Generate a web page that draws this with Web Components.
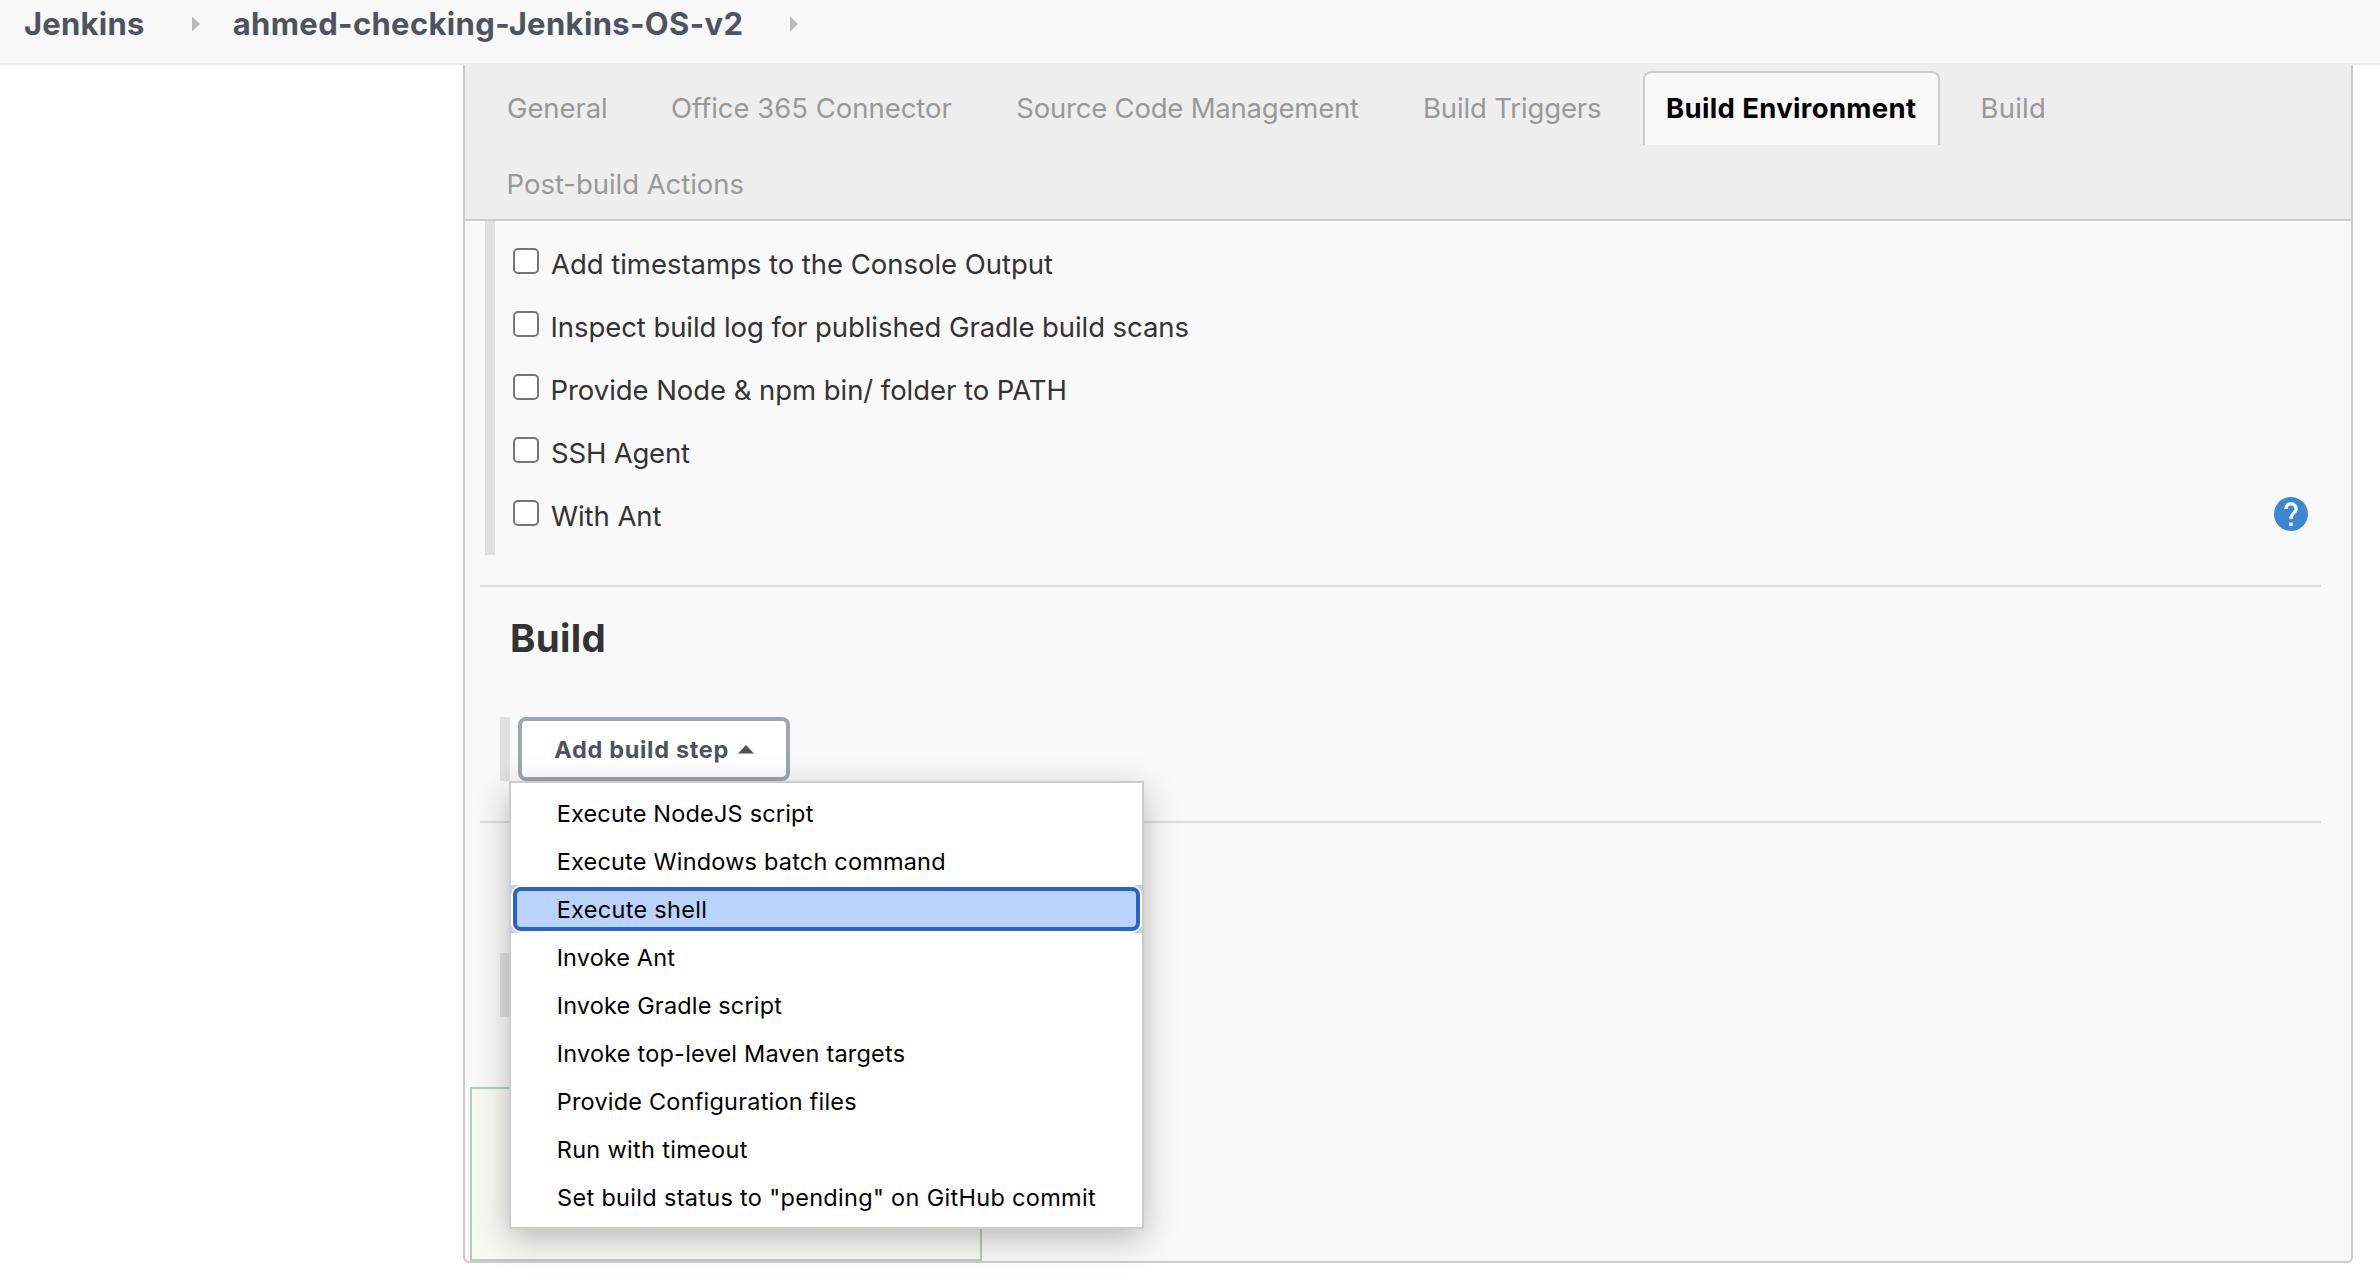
<!DOCTYPE html>
<html lang="en">
<head>
<meta charset="utf-8">
<title>ahmed-checking-Jenkins-OS-v2 Config</title>
<style>
  html, body { margin: 0; height: 100%; background: #fff; overflow: hidden; }
  body { font-family: Inter, "Liberation Sans", sans-serif; color: #333; }
</style>
</head>
<body>
<jenkins-config></jenkins-config>
<script>
const define = (name, html, setup) => {
  const template = document.createElement('template');
  template.innerHTML = html;
  customElements.define(name, class extends HTMLElement {
    connectedCallback() {
      if (this.shadowRoot) return;
      this.attachShadow({ mode: 'open' }).append(template.content.cloneNode(true));
      if (setup) setup(this);
    }
  });
};

// A one-line label tracked so that its glyphs span exactly the "w" pixels;
const pen = document.createElement('canvas').getContext('2d');
define('tracked-label', `
  <style>
    :host { display: block; flex: none; white-space: nowrap; }
    span { display: block; }
  </style>
  <span><slot></slot></span>`, el => {
  const cs = getComputedStyle(el);
  const text = el.textContent;
  const w = parseFloat(el.getAttribute('w'));
  const dx = parseFloat(el.getAttribute('dx') || 0);
  pen.font = `${cs.fontWeight} ${cs.fontSize} ${cs.fontFamily}`;
  const m = pen.measureText(text);
  const ink = m.actualBoundingBoxLeft + m.actualBoundingBoxRight;
  el.style.width = w + 'px';
  const span = el.shadowRoot.querySelector('span');
  span.style.letterSpacing = (w - ink - dx) / (text.length - 1) + 'px';
  span.style.marginLeft = m.actualBoundingBoxLeft + dx + 'px';
});

define('crumb-arrow', `
  <style>:host { display: block; flex: none; width: 8px; height: 16px; } svg { display: block; }</style>
  <svg width="8" height="16" viewBox="0 0 8 16"><path d="M0 0.5L8 8L0 15.5Z" fill="#b9b9b9"/></svg>`);

define('crumb-bar', `
  <style>
    :host { display: block; box-sizing: border-box; height: 65px; background: #f8f8f8; border-bottom: 2px solid #eaeef2; }
    nav { display: flex; align-items: center; height: 47px; padding-left: 25px; line-height: 47px; font-size: 31px; font-weight: 700; color: #4d545d; }
    crumb-arrow.a { margin: 0 33px 0 48px; }
    crumb-arrow.b { margin-left: 48.5px; }
  </style>
  <nav>
    <tracked-label w="119">Jenkins</tracked-label><crumb-arrow class="a"></crumb-arrow>
    <tracked-label w="508.5" dx="0.7">ahmed-checking-Jenkins-OS-v2</tracked-label><crumb-arrow class="b"></crumb-arrow>
  </nav>`);

define('config-tab', `
  <style>
    :host { display: block; box-sizing: border-box; height: 74px; line-height: 74px; padding: 0 21px; color: #999; }
    :host([active]) { margin: 0 -2px 0 -3px; padding: 0 21.5px; line-height: 70px; border: 2px solid #ccc; border-bottom: 0;
      border-radius: 8px 8px 0 0; background: #f9f9f9; color: #000; font-weight: 700; }
  </style>
  <slot></slot>`);

define('config-tabs', `
  <style>
    :host { display: flex; flex-direction: column; gap: 2px; box-sizing: border-box; height: 156px; padding: 6px 0 0 22px;
      background: #eee; border-bottom: 2px solid #ccc; font-size: 27.5px; }
    div { display: flex; gap: 24px; }
  </style>
  <div>
    <config-tab><tracked-label w="98">General</tracked-label></config-tab>
    <config-tab><tracked-label w="279.5">Office 365 Connector</tracked-label></config-tab>
    <config-tab><tracked-label w="341.5" dx="-0.3">Source Code Management</tracked-label></config-tab>
    <config-tab><tracked-label w="176">Build Triggers</tracked-label></config-tab>
    <config-tab active><tracked-label w="249.5" dx="0.5">Build Environment</tracked-label></config-tab>
    <config-tab><tracked-label w="61.5">Build</tracked-label></config-tab>
  </div>
  <div><config-tab><tracked-label w="235.5" dx="0.6">Post-build Actions</tracked-label></config-tab></div>`);

define('check-row', `
  <style>
    :host { display: flex; align-items: flex-start; height: 63px; line-height: 48px; font-size: 27.5px; }
    i { flex: none; box-sizing: border-box; width: 26px; height: 26px; margin: 8px 13px 0 0; border: 2px solid #767676; border-radius: 5px; background: #fff; }
    .end { margin: 5px 0 0 auto; }
  </style>
  <i></i><slot></slot><div class="end"><slot name="help"></slot></div>`);

define('help-icon', `
  <style>:host { display: block; width: 34px; height: 34px; } svg { display: block; }</style>
  <svg width="34" height="34" viewBox="2 2 20 20"><path fill="#3b87d3" d="M12 2C6.48 2 2 6.48 2 12s4.48 10 10 10 10-4.48 10-10S17.52 2 12 2zm1 17h-2v-2h2v2zm2.07-7.75l-.9.92C13.45 12.9 13 13.5 13 15h-2v-.5c0-1.1.45-2.1 1.17-2.83l1.24-1.26c.37-.36.59-.86.59-1.41 0-1.1-.9-2-2-2s-2 .9-2 2H8c0-2.21 1.79-4 4-4s4 1.79 4 4c0 .88-.36 1.68-.93 2.25z"/></svg>`);

define('check-group', `
  <style>:host { display: block; box-sizing: border-box; height: 334px; margin: 0 43px 0 20px; padding: 19px 0 0 18px; border-left: 10px solid #e0e0e0; }</style>
  <slot></slot>`);

define('section-rule', `
  <style>:host { display: block; height: 2px; margin: 0 30px 0 15px; background: #dcdcdc; }</style>`);

define('menu-item', `
  <style>
    :host { display: block; height: 48px; line-height: 50px; }
    div { box-sizing: border-box; height: 48px; padding-left: 47.7px; }
    :host([selected]) { background: #b9d3fb; padding: 2px; height: 44px; line-height: 44px; }
    :host([selected]) div { height: 44px; line-height: 38px; padding-left: 41.7px; border: 4px solid #2a61cb; border-radius: 8px; box-shadow: 0 0 0 2px #fff; }
  </style>
  <div><slot></slot></div>`);

define('step-menu', `
  <style>
    :host { display: block; box-sizing: border-box; width: 635px; height: 448px; padding: 6px 0; border: 2px solid #ccc; background: #fff;
      box-shadow: 0 10px 32px rgba(0,0,0,.26); font-size: 23.5px; font-weight: 400; color: #000; }
  </style>
  <menu-item><tracked-label w="255">Execute NodeJS script</tracked-label></menu-item>
  <menu-item><tracked-label w="385.5">Execute Windows batch command</tracked-label></menu-item>
  <menu-item selected><tracked-label w="146.5">Execute shell</tracked-label></menu-item>
  <menu-item><tracked-label w="116.5">Invoke Ant</tracked-label></menu-item>
  <menu-item><tracked-label w="223.5">Invoke Gradle script</tracked-label></menu-item>
  <menu-item><tracked-label w="346">Invoke top-level Maven targets</tracked-label></menu-item>
  <menu-item><tracked-label w="297.5">Provide Configuration files</tracked-label></menu-item>
  <menu-item><tracked-label w="189">Run with timeout</tracked-label></menu-item>
  <menu-item><tracked-label w="537.3" dx="-0.6">Set build status to "pending" on GitHub commit</tracked-label></menu-item>`);

define('step-adder', `
  <style>
    :host { display: block; position: relative; box-sizing: border-box; height: 64px; margin-left: 35px; padding-left: 8px; border-left: 10px solid #e0e0e0; }
    button { display: flex; align-items: center; box-sizing: border-box; width: 272px; height: 64px; margin: 0; padding: 0 0 0 33px;
      border: 4px solid #9ca7af; border-radius: 8px; background: #fff; font: 700 23.5px/56px Inter, sans-serif; color: #4d545d; }
    tracked-label { padding-top: 1px; }
    svg { margin: 0 0 0 10.5px; }
    step-menu { position: absolute; left: -1px; top: 64px; }
  </style>
  <button><tracked-label w="172.5" dx="-0.7">Add build step</tracked-label><svg width="16" height="9" viewBox="0 0 16 9"><path d="M0 8.5L8 0L16 8.5Z" fill="#4d545d"/></svg></button>
  <step-menu></step-menu>`);

define('jenkins-config', `
  <style>
    :host { display: block; }
    main { display: flex; flex-direction: column; box-sizing: border-box; width: 1890px; height: 1198px; margin-left: 463px;
      border: 2px solid #ccc; border-top: 0; border-radius: 0 0 6px 6px; background: #f9f9f9; }
    h2 { margin: 21px 0 49px 47px; font-size: 38.5px; line-height: 60px; font-weight: 700; color: #333; }
    .first { margin-top: 30px; }
    .second { margin-top: 40px; }
    .stub { width: 10px; height: 64px; margin: 130px 0 70px 35px; background: #e0e0e0; }
    .save { box-sizing: border-box; width: 512px; height: 174px; margin-left: 5px; border: 2px solid #b0cfbe; background: #f6faf2; }
  </style>
  <crumb-bar></crumb-bar>
  <main>
    <config-tabs></config-tabs>
    <check-group>
      <check-row><tracked-label w="501" dx="-1">Add timestamps to the Console Output</tracked-label></check-row>
      <check-row><tracked-label w="636.5" dx="0.5">Inspect build log for published Gradle build scans</tracked-label></check-row>
      <check-row><tracked-label w="513.5" dx="0.5">Provide Node &amp; npm bin/ folder to PATH</tracked-label></check-row>
      <check-row><tracked-label w="138">SSH Agent</tracked-label></check-row>
      <check-row><tracked-label w="109.5" dx="-1">With Ant</tracked-label><help-icon slot="help"></help-icon></check-row>
    </check-group>
    <section-rule class="first"></section-rule>
    <h2><tracked-label w="91.5">Build</tracked-label></h2>
    <step-adder></step-adder>
    <section-rule class="second"></section-rule>
    <div class="stub"></div>
    <div class="save"></div>
  </main>`);
</script>
</body>
</html>
